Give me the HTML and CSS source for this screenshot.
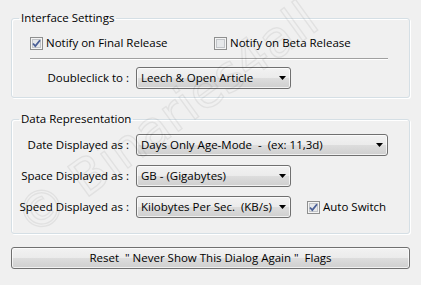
FILE: index.html
```html
<!DOCTYPE html>
<html lang="en">
<head>
    <meta charset="UTF-8">
    <title>Settings</title>
    <link rel="stylesheet" href="styles.css">
</head>
<body>
    <div class="dialog">
        <fieldset class="group">
            <legend>Interface Settings</legend>
            <div class="check-row">
                <label class="check">
                    <svg class="box" width="13" height="13" viewBox="0 0 13 13"><rect x="0.5" y="0.5" width="12" height="12" fill="#f4f4f4" stroke="#8e8f8f"/><rect x="2.5" y="2.5" width="8" height="8" fill="#e6e8ea" stroke="#c2c5c9"/><path d="M3 6.5 L5.3 9 L10 3.2" fill="none" stroke="#4a5f97" stroke-width="1.8"/></svg>
                    Notify on Final Release
                </label>
                <label class="check">
                    <svg class="box" width="13" height="13" viewBox="0 0 13 13"><rect x="0.5" y="0.5" width="12" height="12" fill="#f4f4f4" stroke="#8e8f8f"/><rect x="2.5" y="2.5" width="8" height="8" fill="#e6e8ea" stroke="#c2c5c9"/></svg>
                    Notify on Beta Release
                </label>
            </div>
            <hr class="sep">
            <div class="fields">
                <span class="field-label">Doubleclick to :</span>
                <div class="combo narrow">
                    <span>Leech &amp; Open Article</span>
                    <svg width="7" height="4" viewBox="0 0 7 4"><path d="M0 0 H7 L3.5 4 Z" fill="#000"/></svg>
                </div>
            </div>
        </fieldset>

        <fieldset class="group second">
            <legend>Data Representation</legend>
            <div class="fields">
                <span class="field-label">Date Displayed as :</span>
                <div class="combo wide">
                    <span>Days Only Age-Mode &nbsp;- &nbsp;(ex: 11,3d)</span>
                    <svg width="7" height="4" viewBox="0 0 7 4"><path d="M0 0 H7 L3.5 4 Z" fill="#000"/></svg>
                </div>

                <span class="field-label">Space Displayed as :</span>
                <div class="combo narrow">
                    <span>GB - (Gigabytes)</span>
                    <svg width="7" height="4" viewBox="0 0 7 4"><path d="M0 0 H7 L3.5 4 Z" fill="#000"/></svg>
                </div>

                <span class="field-label">Speed Displayed as :</span>
                <div class="with-check">
                    <div class="combo narrow">
                        <span>Kilobytes Per Sec. &nbsp;(KB/s)</span>
                        <svg width="7" height="4" viewBox="0 0 7 4"><path d="M0 0 H7 L3.5 4 Z" fill="#000"/></svg>
                    </div>
                    <label class="check">
                        <svg class="box" width="13" height="13" viewBox="0 0 13 13"><rect x="0.5" y="0.5" width="12" height="12" fill="#f4f4f4" stroke="#8e8f8f"/><rect x="2.5" y="2.5" width="8" height="8" fill="#e6e8ea" stroke="#c2c5c9"/><path d="M3 6.5 L5.3 9 L10 3.2" fill="none" stroke="#4a5f97" stroke-width="1.8"/></svg>
                        Auto Switch
                    </label>
                </div>
            </div>
        </fieldset>

        <button class="reset">Reset &nbsp;" Never Show This Dialog Again " &nbsp;Flags</button>

        <div class="watermark">© Binaries4all</div>
    </div>
</body>
</html>
```

FILE: styles.css
```css
html, body {
    margin: 0;
    height: 100%;
}
body {
    background: #f0f0f0;
    font-family: 'Open Sans', 'Noto Sans', sans-serif;
    font-size: 11.5px;
    line-height: 16px;
    color: #000;
    overflow: hidden;
}
.dialog {
    position: relative;
    padding: 10px 11px 0;
    display: flex;
    flex-direction: column;
}
.group {
    margin: 0;
    padding: 0 0 8px;
    min-width: 0;
    border: 1px solid #d5dfe5;
    border-radius: 3px;
    box-shadow: inset 1px 1px 0 #fff, 1px 1px 0 #fff;
}
.group legend {
    margin-left: 7px;
    padding: 0 2px;
    line-height: 16px;
}
.second {
    margin-top: 13px;
    padding-bottom: 15px;
}
.check-row {
    display: grid;
    grid-template-columns: 184px auto;
    margin: 9px 0 0 18px;
}
.check {
    display: flex;
    align-items: center;
    gap: 3px;
    height: 16px;
    white-space: nowrap;
}
.box {
    flex: none;
}
.sep {
    margin: 7px 21px 0 18px;
    height: 0;
    border: 0;
    border-top: 1px solid #a0a0a0;
    border-bottom: 1px solid #fff;
}
.fields {
    display: grid;
    grid-template-columns: 117px auto;
    column-gap: 7px;
    row-gap: 9px;
    align-items: center;
    margin-top: 7px;
}
.field-label {
    text-align: right;
    white-space: nowrap;
}
.combo {
    box-sizing: border-box;
    height: 22px;
    display: flex;
    align-items: center;
    justify-content: space-between;
    padding: 0 4px 0 4px;
    border: 1px solid #707070;
    border-radius: 3px;
    background: linear-gradient(#f2f2f2 0%, #ebebeb 50%, #dddddd 50%, #cfcfcf 100%);
    box-shadow: inset 0 0 0 1px rgba(255,255,255,0.7);
    white-space: nowrap;
}
.combo svg {
    flex: none;
}
.narrow {
    width: 155px;
}
.wide {
    width: 252px;
}
.with-check {
    display: flex;
    align-items: center;
    gap: 16px;
}
.reset {
    margin-top: 13px;
    height: 22px;
    padding: 0;
    font: inherit;
    color: #000;
    border: 1px solid #707070;
    border-radius: 3px;
    background: linear-gradient(#f2f2f2 0%, #ebebeb 50%, #dddddd 50%, #cfcfcf 100%);
    box-shadow: inset 0 0 0 1px rgba(255,255,255,0.7);
}
.watermark {
    position: absolute;
    left: 22px;
    top: 198px;
    font-family: 'DejaVu Sans', sans-serif;
    font-size: 50px;
    line-height: 52px;
    white-space: nowrap;
    color: transparent;
    -webkit-text-stroke: 1.5px rgba(0,0,0,0.06);
    transform: rotate(-36deg);
    transform-origin: left center;
    pointer-events: none;
}
```
